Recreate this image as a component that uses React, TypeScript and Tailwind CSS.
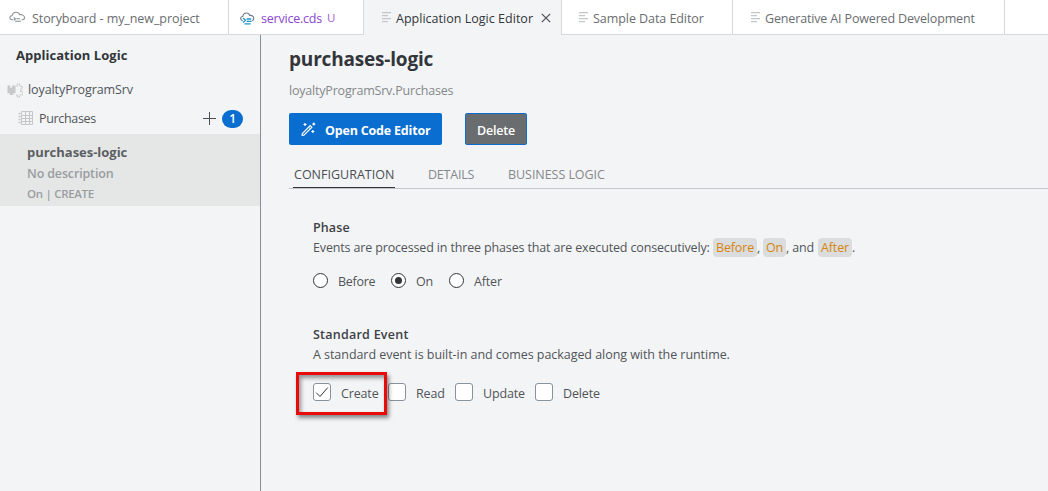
import type { ReactNode } from "react";

function StoryboardIcon() {
  return (
    <svg width="17" height="14" viewBox="0 0 17 14" fill="none" className="mb-[2px] block shrink-0">
      <path
        d="M4 8.800H3.100C1.700 8.700.800 7.800.900 6.500 1 5.300 1.900 4.600 3.100 4.700 3.500 2.600 5.100 1.200 7.100 1.200c1.800 0 3.100 1 3.700 2.500 2.200-.400 4.500.6 4.700 2.700.1 1.500-.800 2.300-2 2.400h-1"
        stroke="#8d9093"
        strokeWidth="1.100"
      />
      <path d="m4.700 6.500 1.800 1.400-1.800 1.400M7.500 7.700h3.500M6 10.200h6" stroke="#8d9093" strokeWidth="1.100" />
    </svg>
  );
}

function ServiceIcon() {
  return (
    <svg width="15" height="14" viewBox="0 0 15 14" fill="none" className="block shrink-0">
      <path
        d="M2.600 8.700C1.300 8.300.600 7.400.700 6.300.800 5.100 1.700 4.400 2.800 4.500 3.100 2.400 4.500 1 6.400 1c1.700 0 2.900 1 3.400 2.500 2-.400 3.900.8 4 2.800.1 1.300-.600 2.200-1.700 2.500"
        stroke="#68798a"
        strokeWidth="1.100"
      />
      <path d="m3 6.300 2.500 2L3 10.500M6.600 7h4.600M6.600 9.300h5M4.500 11.800h6" stroke="#1e93cf" strokeWidth="1.300" />
    </svg>
  );
}

function LinesIcon() {
  return (
    <svg width="10" height="11" viewBox="0 0 10 11" className="mb-[3px] block shrink-0" fill="#c4c5c6">
      <path d="M1 0h9v1.200H1zM1 3h6v1.200H1zM1 6h9v1.200H1zM1 9h6v1.200H1z" />
    </svg>
  );
}

function PuzzleIcon() {
  return (
    <svg width="16" height="15" viewBox="0 0 16 15" className="block shrink-0">
      <path d="M.500 2.500h2.700v2.300h2V2.500H8.500v7.800H6.300V12H2.800v-1.700H.500z" fill="#c6c8ca" />
      <path
        d="M8.800 3h1.700V1h2v2h2.700v3h-1.500v2.500h1.500V12h-2.700v1.800h-2V12H8.800"
        fill="none"
        stroke="#c9cbcd"
        strokeWidth="1.200"
        strokeDasharray="2 0.600"
      />
    </svg>
  );
}

function TableIcon() {
  return (
    <svg width="16" height="15" viewBox="0 0 16 15" fill="none" stroke="#c6c7c8" className="mb-px block shrink-0">
      <path d="M3.500.500h11v13h-11zM7.500.500v13M11.500.500v13M3 4.500h12M3 7.500h12M3 10.500h12" />
      <path d="M.500 2.500h2M.500 5.500h2M.500 8.500h2M.500 11.500h2" strokeWidth="1.500" />
    </svg>
  );
}

function WandIcon() {
  return (
    <svg width="15" height="15" viewBox="0 0 15 15" fill="none" stroke="#fff" className="block shrink-0">
      <path d="M1.300 11.600 9.200 3.500l1.700 1.700-8 8-1.700.1z" strokeWidth="1.200" />
      <path d="m7.700 5.200 1.500 1.500" />
      <path d="M4 1v3M2.500 2.500h3M12.800.6v3M11.300 2.100h3M11.800 8v3M10.300 9.500h3" strokeWidth="1.200" />
    </svg>
  );
}

function Tab({ className, children }: { className: string; children: ReactNode }) {
  return (
    <div className={`flex h-[35px] shrink-0 items-center border-r border-[#d7d8d9] pt-[3px] ${className}`}>
      {children}
    </div>
  );
}

function Radio({ label, checked, className }: { label: string; checked?: boolean; className: string }) {
  return (
    <label className={`flex items-center ${className}`}>
      <span className="mr-[10px] flex size-[15px] shrink-0 items-center justify-center rounded-full border border-[#32363a] bg-white">
        {checked && <span className="size-[7px] rounded-full bg-[#32363a]" />}
      </span>
      <span className="pt-[3px]">{label}</span>
    </label>
  );
}

function Check({ label, checked, className }: { label: string; checked?: boolean; className: string }) {
  return (
    <label className={`flex items-center ${className}`}>
      <span className="mr-[10px] flex size-[18px] shrink-0 items-center justify-center rounded-[3px] border border-[#89919a] bg-white">
        {checked && (
          <svg width="14" height="14" viewBox="0 0 14 14" fill="none" stroke="#32363a" strokeWidth="1">
            <path d="M1.200 7.700 5 11.500 12.800 2.500" />
          </svg>
        )}
      </span>
      <span className="pt-[4px]">{label}</span>
    </label>
  );
}

function Code({ className, children }: { className: string; children: ReactNode }) {
  return (
    <code
      className={`inline-block h-[19px] rounded-[4px] bg-[#dbdcdd] text-center font-['Open_Sans',sans-serif] leading-[20px] text-[#d5850f] ${className}`}
    >
      {children}
    </code>
  );
}

export default function App() {
  return (
    <div className="flex h-[491px] w-[1048px] flex-col overflow-hidden bg-[#f3f4f6] font-['Open_Sans',sans-serif] text-[12.500px] leading-[18px] tracking-[-0.150px] whitespace-nowrap text-[#515559]">
      <nav className="flex h-[35px] shrink-0 bg-white text-[#6a6d70]">
        <Tab className="w-[229px] border-b pl-[9px]">
          <StoryboardIcon />
          <span className="ml-[6px] tracking-[-0.070px]">Storyboard - my_new_project</span>
        </Tab>
        <Tab className="w-[135px] border-b pl-[11px]">
          <ServiceIcon />
          <span className="ml-[6px] w-[66px] tracking-[-0.220px] text-[#8b45cf]">service.cds</span>
          <span className="pb-[2px] text-[11.500px] text-[#9c61d6]">U</span>
        </Tab>
        <Tab className="w-[198px] bg-[#f3f4f6] pl-[17px] text-[#32363a]">
          <LinesIcon />
          <span className="ml-[5px] w-[145px] tracking-[0.020px]">Application Logic Editor</span>
          <svg width="10" height="10" viewBox="0 0 10 10" fill="none" stroke="#4b5054" strokeWidth="1.200" className="mb-[3px]">
            <path d="m.800.800 8.400 8.400M9.200.800.800 9.200" />
          </svg>
        </Tab>
        <Tab className="w-[171px] border-b pl-[16px]">
          <LinesIcon />
          <span className="ml-[5px] tracking-[-0.060px]">Sample Data Editor</span>
        </Tab>
        <Tab className="w-[272px] border-b pl-[17px]">
          <LinesIcon />
          <span className="ml-[5px] tracking-[-0.150px]">Generative AI Powered Development</span>
        </Tab>
        <div className="flex-1 border-b border-[#d7d8d9]" />
      </nav>

      <div className="flex flex-1">
        <aside className="w-[261px] shrink-0 border-r border-[#848f9a]">
          <h2 className="pt-[11px] pl-4 text-[13px] font-bold tracking-[0.030px] text-[#32363a]">Application Logic</h2>
          <div className="mt-[17px] flex items-center pl-[7px]">
            <PuzzleIcon />
            <span className="ml-[5px] tracking-[-0.090px]">loyaltyProgramSrv</span>
          </div>
          <div className="mt-[10px] flex h-[20px] items-center pl-[18px]">
            <TableIcon />
            <span className="ml-[5px] w-[164px] tracking-[-0.320px]">Purchases</span>
            <svg width="13" height="13" viewBox="0 0 13 13" stroke="#4b5054" className="mb-[2px]">
              <path d="M6.500 0v13M0 6.500h13" />
            </svg>
            <span className="mb-px ml-[6px] flex h-[18px] w-[21px] items-center justify-center rounded-full bg-[#0a6ed1] text-[12px] font-semibold text-white">
              1
            </span>
          </div>
          <div className="mt-[5px] h-[72px] bg-[#e5e7e7] pt-[9px] pl-[27px] font-semibold text-[#9a9da0]">
            <div className="text-[13px] font-bold tracking-[-0.020px] text-[#5b5f62]">purchases-logic</div>
            <div className="mt-[4px]">No description</div>
            <div className="mt-[2px] text-[11.500px] tracking-[-0.300px]">On | CREATE</div>
          </div>
        </aside>

        <main className="min-w-0 flex-1 pl-[28px]">
          <h1 className="pt-[11px] text-[19px] leading-[26px] font-bold tracking-[-0.190px] text-[#32363a]">purchases-logic</h1>
          <p className="mt-[10px] tracking-[-0.200px] text-[#85888b]">loyaltyProgramSrv.Purchases</p>
          <div className="mt-[13px] flex gap-[23px]">
            <button className="flex h-[32px] w-[153px] items-center rounded-[2px] bg-[#0a6ed1] pl-[12px] font-bold tracking-[-0.190px] text-white">
              <WandIcon />
              <span className="ml-[9px] pt-[3px]">Open Code Editor</span>
            </button>
            <button className="flex h-[32px] w-[62px] items-center justify-center rounded-[2px] border border-[#0a6ed1] bg-[#6a6d70] pt-[3px] font-semibold tracking-[-0.200px] text-white">
              Delete
            </button>
          </div>
          <div className="mt-[13px] flex h-[31px] items-stretch border-b border-[#c5c8cb] pl-[4px] leading-[34px] text-[#85888b]">
            <span className="w-[102px] border-b border-[#32363a] pl-px tracking-[0.010px] text-[#4b4f53]">CONFIGURATION</span>
            <span className="ml-[33px] w-[80px] tracking-[-0.200px]">DETAILS</span>
            <span className="tracking-[-0.050px]">BUSINESS LOGIC</span>
          </div>

          <section className="pt-[30px] pl-[24px]">
            <h3 className="font-semibold tracking-[0.120px] text-[#3d4145]">Phase</h3>
            <p className="mt-px flex h-[19px] items-center">
              <span className="w-[400px] tracking-[-0.150px]">
                Events are processed in three phases that are executed consecutively:
              </span>
              <Code className="w-[44px]">Before</Code>
              <span className="w-[6px]">,</span>
              <Code className="w-[23px]">On</Code>
              <span className="w-[32px]">, and</span>
              <Code className="w-[34px]">After</Code>
              <span>.</span>
            </p>
            <div className="mt-[14px] flex h-[19px] items-center">
              <Radio className="w-[78px] tracking-[-0.270px]" label="Before" />
              <Radio className="w-[58px]" label="On" checked />
              <Radio className="w-[60px]" label="After" />
            </div>
          </section>

          <section className="pt-[36px] pl-[24px]">
            <h3 className="font-semibold tracking-[0.240px] text-[#3d4145]">Standard Event</h3>
            <p className="mt-[2px] tracking-[-0.050px]">A standard event is built-in and comes packaged along with the runtime.</p>
            <div className="relative mt-[19px] flex h-[18px] items-center">
              <Check className="w-[75px]" label="Create" checked />
              <Check className="w-[67px]" label="Read" />
              <Check className="w-[80px]" label="Update" />
              <Check className="w-[70px]" label="Delete" />
              <div className="absolute top-[-11px] left-[-17px] h-[43px] w-[91px] border-[3px] border-[#e90a0a] shadow-[2px_3px_4px_rgba(0,0,0,0.450),inset_2px_3px_4px_rgba(0,0,0,0.400)]" />
            </div>
          </section>
        </main>
      </div>
    </div>
  );
}
